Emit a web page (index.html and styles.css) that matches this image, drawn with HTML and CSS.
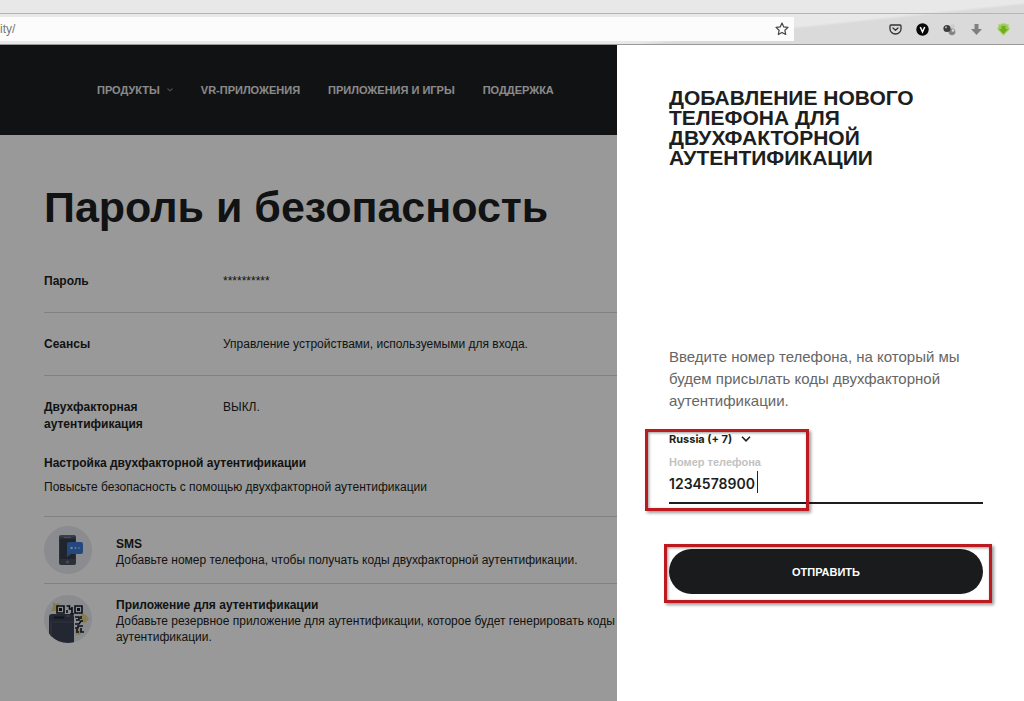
FILE: index.html
```html
<!DOCTYPE html>
<html lang="ru">
<head>
  <meta charset="UTF-8">
  <meta name="viewport" content="width=device-width, initial-scale=1.0">
  <title>Пароль и безопасность</title>
  <link rel="stylesheet" href="styles.css">
</head>
<body>
  <div class="browser">
    <div class="tab-strip"></div>
    <div class="toolbar">
      <div class="address">
        <span class="url">ity/</span>
        <svg width="14" height="14" viewBox="0 0 14 14" fill="none" stroke="#444" stroke-width="1.2" stroke-linejoin="round">
          <path d="M7 1l1.8 3.9 4.2.5-3.1 2.9.8 4.2L7 10.4l-3.7 2.1.8-4.2L1 5.4l4.2-.5z"></path>
        </svg>
      </div>
      <div class="extensions">
        <svg width="13" height="13" viewBox="0 0 13 13" fill="none" stroke="#333" stroke-width="1.3" stroke-linecap="round" stroke-linejoin="round">
          <path d="M2 2h9a1 1 0 0 1 1 1v3a5.5 5 0 0 1-11 0V3a1 1 0 0 1 1-1z"></path>
          <path d="M4 5l2.5 2.3L9 5"></path>
        </svg>
        <svg width="13" height="13" viewBox="0 0 13 13">
          <circle cx="6.500" cy="6.500" r="6.200" fill="#080808"></circle>
          <path d="M4.300 4l2.200 5 2.200-5" fill="none" stroke="#fff" stroke-width="1.500"></path>
        </svg>
        <svg width="13" height="13" viewBox="0 0 13 13">
          <circle cx="9.500" cy="3.500" r="2.300" fill="#ccc"></circle>
          <circle cx="9" cy="8.800" r="3.400" fill="#858585"></circle>
          <circle cx="10" cy="7.500" r="1.300" fill="#ddd"></circle>
          <circle cx="4" cy="5.500" r="3.600" fill="#3c3c3c"></circle>
          <circle cx="3" cy="4.300" r="1.100" fill="#aaa"></circle>
        </svg>
        <svg width="13" height="13" viewBox="0 0 13 13">
          <path d="M4.500 1h4v5H12l-5.500 6L1 6h3.500z" fill="#808080"></path>
        </svg>
        <svg width="13" height="13" viewBox="0 0 13 13">
          <path d="M1.500 1l2 .8L4.500.5h4l1 1.300 2-.8v3l1.300 2-6.300 6.500L.3 6l1.200-2z" fill="#9bd04a"></path>
          <path d="M4.500 3h4v3h2.500l-4.500 5L2 6h2.500z" fill="#6fae1c"></path>
        </svg>
      </div>
    </div>
  </div>

  <div class="viewport">
    <div class="page">
      <header class="site-header">
        <nav>
          <a href="#">ПРОДУКТЫ
            <svg width="6" height="4" viewBox="0 0 6 4" fill="none" stroke="#77797b" stroke-width="1.2"><path d="M.5.5L3 3 5.500.5"></path></svg>
          </a>
          <a href="#">VR-ПРИЛОЖЕНИЯ</a>
          <a href="#">ПРИЛОЖЕНИЯ И ИГРЫ</a>
          <a href="#">ПОДДЕРЖКА</a>
        </nav>
      </header>
      <main>
        <h1>Пароль и безопасность</h1>
        <dl>
          <div class="row">
            <dt>Пароль</dt>
            <dd>**********</dd>
          </div>
          <div class="row">
            <dt>Сеансы</dt>
            <dd>Управление устройствами, используемыми для входа.</dd>
          </div>
          <div class="row two-factor">
            <dt>Двухфакторная аутентификация</dt>
            <dd>ВЫКЛ.</dd>
          </div>
        </dl>
        <section class="setup">
          <h2>Настройка двухфакторной аутентификации</h2>
          <p>Повысьте безопасность с помощью двухфакторной аутентификации</p>
        </section>
        <ul class="methods">
          <li>
            <svg width="48" height="48" viewBox="0 0 48 48">
              <circle cx="24" cy="24" r="24" fill="#e6eaee"></circle>
              <rect x="15" y="9" width="17" height="30" rx="2" fill="#4a5160"></rect>
              <rect x="16" y="13" width="15" height="20" fill="#353c4b"></rect>
              <path d="M16 10h15M20 11.500h7" stroke="#7b818d"></path>
              <circle cx="23.500" cy="36" r="1.500" fill="#7b818c"></circle>
              <path d="M25 16h12a2 2 0 0 1 2 2v8a2 2 0 0 1-2 2H27l-4 3V18a2 2 0 0 1 2-2z" fill="#3b78d0"></path>
              <g fill="#b9d2f6"><circle cx="27.500" cy="22" r="1.300"></circle><circle cx="31.500" cy="22" r="1"></circle><circle cx="35" cy="22" r=".8"></circle></g>
            </svg>
            <div>
              <h3>SMS</h3>
              <p>Добавьте номер телефона, чтобы получать коды двухфакторной аутентификации.</p>
            </div>
          </li>
          <li>
            <svg width="48" height="48" viewBox="0 0 48 48">
              <clipPath id="round"><circle cx="24" cy="24" r="24"></circle></clipPath>
              <circle cx="24" cy="24" r="24" fill="#e6eaee"></circle>
              <g fill="#e2ce85">
                <path d="M9 7l3 2 4-1-2 4 1 4H7l2-4zM38 18l4 2 3 4-4 4-6-2z"></path>
                <circle cx="34" cy="37" r="3"></circle>
              </g>
              <g fill="none" stroke="#111827" stroke-width="1.600">
                <path d="M13 11h7v7h-7zM31 11h7v7h-7z"></path>
                <path d="M22.500 11h3v3h3M23 18v-3M28 12v8M26 19h4M31 22h4v3h-3M37 21v3M31 29h4l2-3h2M31 33h3v-2h5M33 36v-2M32 37h3M37 33v4h3"></path>
              </g>
              <path d="M15 13h3v3h-3zM33 13h3v3h-3z" fill="#111827"></path>
              <g clip-path="url(#round)">
                <path d="M5 22q0-3 3-3h19q3 0 3 3v26H5z" fill="#3a4253"></path>
                <path d="M6 27h24" stroke="#4d5567" stroke-width="1"></path>
                <path d="M10 22.500h10" stroke="#1a202d" stroke-width="2"></path>
                <path d="M22 21h4" stroke="#697080"></path>
                <path d="M7 28v20" stroke="#555d6c"></path>
              </g>
            </svg>
            <div>
              <h3>Приложение для аутентификации</h3>
              <p>Добавьте резервное приложение для аутентификации, которое будет генерировать коды двухфакторной аутентификации.</p>
            </div>
          </li>
        </ul>
      </main>
    </div>
    <div class="overlay"></div>

    <aside class="drawer">
      <h2>ДОБАВЛЕНИЕ НОВОГО ТЕЛЕФОНА ДЛЯ ДВУХФАКТОРНОЙ АУТЕНТИФИКАЦИИ</h2>
      <form>
        <p>Введите номер телефона, на который мы будем присылать коды двухфакторной аутентификации.</p>
        <div class="phone">
          <div class="country">
            <select aria-label="Код страны">
              <option>Russia (+ 7)</option>
            </select>
            <svg width="10" height="6" viewBox="0 0 10 6" fill="none" stroke="#1c1e20" stroke-width="1.600"><path d="M1 .8l4 4 4-4"></path></svg>
          </div>
          <label for="number">Номер телефона</label>
          <input type="tel" id="number" value="1234578900">
          <span class="caret"></span>
          <span class="mark mark-phone"></span>
        </div>
        <div class="submit">
          <button type="button">ОТПРАВИТЬ</button>
          <span class="mark mark-submit"></span>
        </div>
      </form>
    </aside>
  </div>
</body>
</html>
```
FILE: styles.css
```css
:root {
  --ink: #1c1e20;
  --line: #d8d8d8;
  --red: #bd1a20;
}
* {
  box-sizing: border-box;
  margin: 0;
  padding: 0;
}
body {
  display: flex;
  flex-direction: column;
  min-height: 100vh;
  font-family: "Liberation Sans", Arial, sans-serif;
  font-size: 12px;
  line-height: 17px;
  color: var(--ink);
}

/* browser bar */
.browser {
  background: linear-gradient(174deg, #e8e8e8 72%, #dadada 74%);
}
.tab-strip {
  height: 14px;
  border-bottom: 1px solid #b5b5b5;
}
.toolbar {
  display: flex;
  justify-content: space-between;
  height: 31px;
  padding: 3px 14px 3px 0;
  border-bottom: 1px solid #999;
}
.address {
  display: flex;
  flex: 0 1 794px;
  align-items: center;
  justify-content: space-between;
  padding-right: 5px;
  background: #fcfcfc;
}
.url {
  color: #777;
}
.extensions {
  display: flex;
  align-items: center;
  gap: 14px;
}

/* account page */
.viewport {
  position: relative;
  flex: 1;
  overflow: hidden;
}
.site-header {
  height: 90px;
  padding: 0 97px;
  background: var(--ink);
}
nav {
  display: flex;
  align-items: center;
  gap: 28px;
  height: 100%;
}
nav a {
  display: flex;
  align-items: center;
  gap: 7px;
  color: #e6e6e6;
  font-size: 11px;
  font-weight: bold;
  text-decoration: none;
  white-space: nowrap;
}
main {
  padding: 46px 0 30px 44px;
}
h1 {
  font-size: 43px;
  line-height: 52px;
  white-space: nowrap;
}
dl {
  margin-top: 17px;
}
.row {
  display: grid;
  grid-template-columns: 110px 1fr;
  column-gap: 69px;
  padding: 23px 0 22px;
  border-bottom: 1px solid var(--line);
}
.row.two-factor {
  padding-bottom: 0;
  border-bottom: none;
}
dt {
  font-weight: bold;
}
.setup {
  padding: 22px 0 20px;
  border-bottom: 1px solid var(--line);
}
.setup h2 {
  font-size: 12px;
  line-height: 17px;
}
.setup p {
  margin-top: 7px;
}
.methods {
  list-style: none;
}
.methods li {
  display: flex;
  gap: 24px;
  align-items: center;
  padding: 9px 0;
  border-bottom: 1px solid var(--line);
}
.methods li:last-child {
  border-bottom: none;
}
.methods svg {
  flex: none;
}
.methods div {
  max-width: 660px;
  padding-top: 4px;
}
.methods h3 {
  font-size: 12px;
}
.methods h3,
.methods p {
  line-height: 16px;
}
.overlay {
  position: absolute;
  inset: 0;
  background: rgba(0, 0, 0, 0.4);
}

/* side panel */
.drawer {
  position: absolute;
  top: 0;
  right: 0;
  bottom: 0;
  width: 407px;
  padding: 43px 41px 0 52px;
  background: #fff;
}
.drawer h2 {
  max-width: 280px;
  font-size: 21px;
  line-height: 20px;
}
.drawer p {
  margin-top: 178px;
  color: #666;
  font-size: 15px;
  line-height: 22px;
}
.phone {
  position: relative;
  margin-top: 19px;
  border-bottom: 2px solid var(--ink);
}
.country {
  display: flex;
  align-items: center;
  gap: 8px;
}
.country select {
  appearance: none;
  border: none;
  background: none;
  color: var(--ink);
  font: bold 11px/16px Inter, sans-serif;
}
.phone label {
  display: block;
  margin-top: 7px;
  color: #c2c2c2;
  font-size: 11px;
  font-weight: bold;
  line-height: 16px;
}
.phone input {
  display: block;
  width: 100%;
  height: 32px;
  padding-bottom: 6px;
  border: none;
  outline: none;
  background: none;
  color: var(--ink);
  font: 600 14px/22px Inter, sans-serif;
}
.caret {
  position: absolute;
  bottom: 9px;
  left: 88px;
  width: 1px;
  height: 22px;
  background: #222;
}
.submit {
  position: relative;
  margin-top: 45px;
}
.submit button {
  display: block;
  width: 100%;
  height: 45px;
  border: none;
  border-radius: 23px;
  background: #191b1c;
  color: #fff;
  font: bold 11px "Liberation Sans", Arial, sans-serif;
}

/* red highlight frames */
.mark {
  position: absolute;
  border: 3px solid var(--red);
  box-shadow: 2px 2px 3px rgba(0, 0, 0, 0.4), inset 1px 1px 3px rgba(0, 0, 0, 0.4);
  pointer-events: none;
}
.mark-phone {
  top: -2px;
  bottom: -9px;
  left: -24px;
  width: 164px;
}
.mark-submit {
  inset: -5px -9px -9px -5px;
}
```
